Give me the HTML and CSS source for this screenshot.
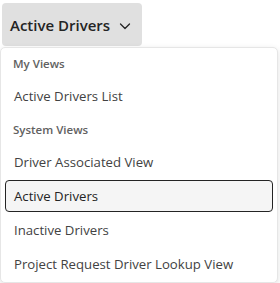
FILE: index.html
```html
<!DOCTYPE html>
<html lang="en">
<head>
  <meta charset="UTF-8">
  <title>View Selector</title>
  <link rel="stylesheet" href="styles.css">
</head>
<body>
  <button class="view-btn">
    <span>Active Drivers</span>
    <svg class="chevron" width="16" height="16" viewBox="0 0 16 16">
      <path d="M3.5 6 L8 10.5 L12.5 6" fill="none" stroke="#242424" stroke-width="1.3" stroke-linecap="round" stroke-linejoin="round"/>
    </svg>
  </button>

  <!-- View list flyout -->
  <div class="menu">
    <div class="group-title">My Views</div>
    <div class="item">Active Drivers List</div>
    <div class="group-title">System Views</div>
    <div class="item">Driver Associated View</div>
    <div class="item selected">Active Drivers</div>
    <div class="item">Inactive Drivers</div>
    <div class="item">Project Request Driver Lookup View</div>
  </div>
</body>
</html>
```

FILE: styles.css
```css
* {
  box-sizing: border-box;
  margin: 0;
  padding: 0;
}
body {
  font-family: 'Open Sans', 'Noto Sans', sans-serif;
  background: #fff;
  color: #242424;
  width: 280px;
  height: 283px;
  overflow: hidden;
}
.view-btn {
  display: flex;
  align-items: center;
  gap: 7px;
  margin: 3px 0 0 2px;
  width: 140px;
  height: 43px;
  padding: 0 8px;
  border: none;
  border-radius: 4px;
  background: #e0e0e0;
  font-family: inherit;
  font-size: 15px;
  font-weight: 600;
  color: #242424;
  white-space: nowrap;
}
.chevron {
  margin-top: 2px;
  flex-shrink: 0;
}
.menu {
  display: flex;
  flex-direction: column;
  gap: 2px;
  margin-top: 1px;
  width: 278px;
  height: 236px;
  padding: 0 4px;
  background: #fff;
  border: 1px solid #e6e6e6;
  border-radius: 5px;
  box-shadow: 0 2px 6px rgba(0,0,0,0.12);
}
.group-title {
  height: 30px;
  display: flex;
  align-items: center;
  padding-left: 8px;
  font-size: 11.5px;
  font-weight: 600;
  color: #616161;
}
.item {
  height: 32px;
  flex-shrink: 0;
  display: flex;
  align-items: center;
  padding-left: 8px;
  border: 1px solid transparent;
  border-radius: 4px;
  font-size: 13.2px;
  color: #424242;
  white-space: nowrap;
}
.item.selected {
  border-color: #242424;
  background: #f5f5f5;
  color: #242424;
}
```
